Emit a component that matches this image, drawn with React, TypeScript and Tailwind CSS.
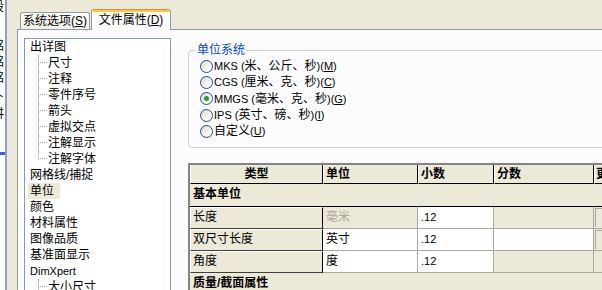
import React from "react";

const tree: { t: string; l: number; last?: boolean; sel?: boolean; latin?: boolean }[] = [
  { t: "出详图", l: 0 },
  { t: "尺寸", l: 1 },
  { t: "注释", l: 1 },
  { t: "零件序号", l: 1 },
  { t: "箭头", l: 1 },
  { t: "虚拟交点", l: 1 },
  { t: "注解显示", l: 1 },
  { t: "注解字体", l: 1, last: true },
  { t: "网格线/捕捉", l: 0 },
  { t: "单位", l: 0, sel: true },
  { t: "颜色", l: 0 },
  { t: "材料属性", l: 0 },
  { t: "图像品质", l: 0 },
  { t: "基准面显示", l: 0 },
  { t: "DimXpert", l: 0, latin: true },
  { t: "大小尺寸", l: 1 },
];

function Connector({ last }: { last?: boolean }) {
  return (
    <div className="w-[18px] h-[16px] flex shrink-0">
      <div className="w-[8px]" />
      <div className="w-[9px] flex flex-col">
        <div className="h-[8px] border-l border-b border-dotted border-[#a0a0a0]" />
        <div className={last ? "h-[8px]" : "h-[8px] border-l border-dotted border-[#a0a0a0]"} />
      </div>
    </div>
  );
}

function Radio({ checked }: { checked?: boolean }) {
  return (
    <span className="w-[13px] h-[13px] rounded-full border border-[#1c5180] bg-[linear-gradient(135deg,#d6d5ce,#ffffff_75%)] flex items-center justify-center shrink-0">
      {checked && <span className="w-[5px] h-[5px] rounded-full bg-[#21a121]" />}
    </span>
  );
}

function L({ children }: { children: React.ReactNode }) {
  return <span className="text-[11px]">{children}</span>;
}

const radios: { pre: string; cjk: string; key: string; checked?: boolean; h: string }[] = [
  { pre: "MKS (", cjk: "米、公斤、秒", key: "M", h: "h-[16px]" },
  { pre: "CGS (", cjk: "厘米、克、秒", key: "C", h: "h-[16px]" },
  { pre: "MMGS (", cjk: "毫米、克、秒", key: "G", checked: true, h: "h-[17px]" },
  { pre: "IPS (", cjk: "英寸、磅、秒", key: "I", h: "h-[16px]" },
];

const dataRows: { label: string; cells: { t?: string; w: boolean; gray?: boolean }[]; btn: boolean }[] = [
  { label: "长度", cells: [{ t: "毫米", w: false, gray: true }, { t: ".12", w: true }, { w: false }], btn: true },
  { label: "双尺寸长度", cells: [{ t: "英寸", w: true }, { t: ".12", w: true }, { w: true }], btn: true },
  { label: "角度", cells: [{ t: "度", w: true }, { t: ".12", w: true }, { w: false }], btn: false },
];
const colW = ["w-[95px]", "w-[76px]", "w-[100px]"];

export default function App() {
  return (
    <div className="w-[602px] h-[290px] overflow-hidden flex bg-[#ece9d8] text-black text-[12px] leading-[12px] font-['Liberation_Sans','Noto_Sans_CJK_SC',sans-serif]">
      {/* background window fragment */}
      <div className="w-[5px] h-full bg-white overflow-hidden shrink-0">
        <div className="-ml-[8px] w-[14px] flex flex-col">
          <span className="h-[16px] pt-[1px]">设</span>
          <span className="h-[24px]" />
          <span className="h-[16px]">铭</span>
          <span className="h-[16px]">铭</span>
          <span className="h-[18px]">铭</span>
          <span className="h-[18px]">卜</span>
          <span className="h-[18px]">讲</span>
          <span className="h-[26px]">-</span>
          <span className="h-[3px] w-full bg-[#3d5fc8]" />
        </div>
      </div>
      <div className="w-[2px] h-full bg-[#8b9fe0] shrink-0" />

      <div className="flex-1 flex flex-col pl-[10px] min-w-0">
        {/* tabs */}
        <div className="h-[29px] flex items-end pl-[3px] shrink-0 relative z-10">
          <div className="w-[70px] h-[17px] border border-b-0 border-[#919b9c] rounded-t-[3px] bg-[linear-gradient(#fefefe,#f1f0ea)] flex items-center justify-center">
            系统选项(<u className="underline-offset-1">S</u>)
          </div>
          <div className="w-[80px] h-[21px] -mb-px ml-px border-x border-[#919b9c] rounded-t-[3px] bg-[#fcfcfe] flex flex-col overflow-hidden">
            <div className="h-px bg-[#e68b2c] shrink-0" />
            <div className="h-[2px] bg-[#ffc73c] shrink-0" />
            <div className="flex-1 flex items-center justify-center pb-[3px]">
              文件属性(<u className="underline-offset-1">D</u>)
            </div>
          </div>
        </div>

        {/* panel */}
        <div className="flex-1 flex border-t border-l border-[#919b9c] bg-[#fcfcfe] min-h-0">
          {/* tree */}
          <div className="ml-[6px] mt-[8px] w-[147px] h-[280px] shrink-0 border border-[#7f9db9] bg-white flex flex-col">
            {tree.map((n, i) => (
              <div key={i} className="h-[16px] flex items-center pl-[5px] shrink-0">
                {n.l === 1 && <Connector last={n.last} />}
                {n.sel ? (
                  <span className="bg-[#ece9d8] -ml-[2px] pl-[2px] pr-[6px] h-[16px] flex items-center">{n.t}</span>
                ) : (
                  <span className={n.latin ? "text-[11px]" : ""}>{n.t}</span>
                )}
              </div>
            ))}
          </div>

          {/* right */}
          <div className="ml-[17px] w-[480px] shrink-0 flex flex-col">
            <fieldset className="mt-[14px] h-[104px] border border-[#d0d0bf] rounded-[4px] p-0 m-0 shrink-0">
              <legend className="ml-[7px] px-[1px] text-[#0046d5]">单位系统</legend>
              <div className="pl-[11px] pt-[2px] flex flex-col">
                {radios.map((r) => (
                  <div key={r.key} className={`${r.h} flex items-center gap-[1px]`}>
                    <Radio checked={r.checked} />
                    <span className="whitespace-nowrap">
                      <L>{r.pre}</L>
                      {r.cjk}
                      <L>
                        )(<u className="underline-offset-1">{r.key}</u>)
                      </L>
                    </span>
                  </div>
                ))}
                <div className="h-[16px] flex items-center gap-[1px]">
                  <Radio />
                  <span className="whitespace-nowrap">
                    自定义<L>(<u className="underline-offset-1">U</u>)</L>
                  </span>
                </div>
              </div>
            </fieldset>

            {/* table */}
            <div className="mt-[15px] border-t-2 border-l-2 border-[#848484] flex flex-col shrink-0">
              <div className="flex h-[19px] font-bold">
                <div className="w-[133px] shrink-0 bg-[#ece9d8] border-l border-l-white border-r border-r-black border-b border-b-black flex items-center justify-center">类型</div>
                <div className="w-[95px] shrink-0 bg-[#ece9d8] border-l border-l-white border-r border-r-black border-b border-b-black flex items-center pl-[2px]">单位</div>
                <div className="w-[76px] shrink-0 bg-[#ece9d8] border-l border-l-white border-r border-r-black border-b border-b-black flex items-center pl-[2px]">小数</div>
                <div className="w-[100px] shrink-0 bg-[#ece9d8] border-l border-l-white border-r border-r-black border-b border-b-black flex items-center pl-[2px]">分数</div>
                <div className="w-[60px] shrink-0 bg-[#ece9d8] border-l border-l-white border-b border-b-black flex items-center pl-px">更新</div>
              </div>
              <div className="h-[23px] bg-[#ece9d8] border-b border-black font-bold pl-[3px] pt-[4px]">基本单位</div>
              {dataRows.map((r) => (
                <div key={r.label} className="flex h-[22px]">
                  <div className="w-[133px] shrink-0 bg-[#ece9d8] border-t border-t-white border-l border-l-white border-r border-r-black border-b border-b-[#404040] pl-[2px] pt-[3px]">
                    {r.label}
                  </div>
                  {r.cells.map((c, j) => (
                    <div
                      key={j}
                      className={`${colW[j]} shrink-0 ${c.w ? "bg-white" : "bg-[#ece9d8]"} ${c.gray ? "text-[#aca899]" : ""} border-r border-b border-[#a9a9a0] pl-[3px] pt-[4px]`}
                    >
                      {c.t && (c.t === ".12" ? <span className="text-[11px]">{c.t}</span> : c.t)}
                    </div>
                  ))}
                  <div className="w-[60px] shrink-0 bg-[#ece9d8] border-b border-[#a9a9a0] pl-px pt-px">
                    {r.btn && <div className="h-[19px] border-t border-l border-[#a9a9a0] bg-[#ece9d8]" />}
                  </div>
                </div>
              ))}
              <div className="h-[22px] bg-[#ece9d8] font-bold pl-[3px] pt-[4px]">质量/截面属性</div>
            </div>
          </div>
        </div>
      </div>
    </div>
  );
}
